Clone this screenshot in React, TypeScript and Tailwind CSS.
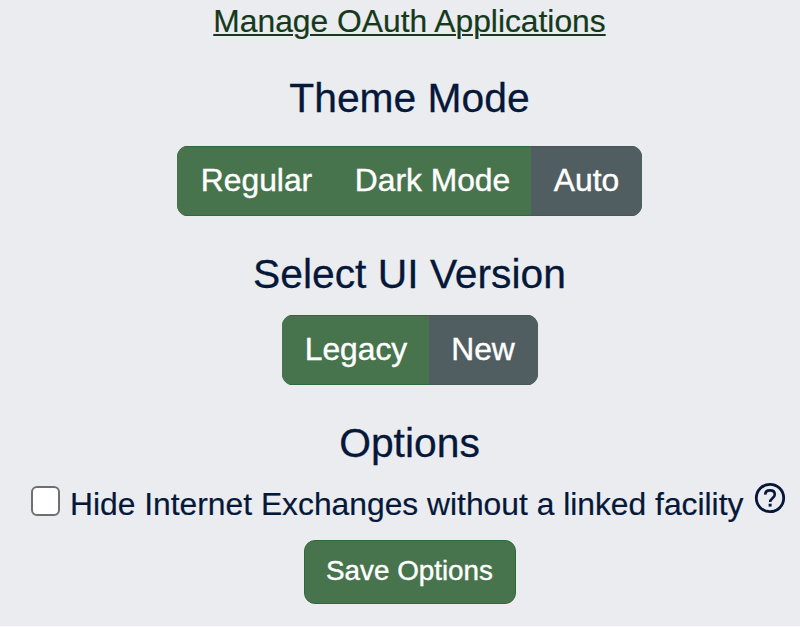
const heading = "h-[48px] whitespace-nowrap text-[40.8px] leading-[48px] [-webkit-text-stroke:0.3px_currentColor]";
const group =
  "flex h-[70px] overflow-hidden rounded-[11px] bg-[#47744d] text-[31.8px] leading-[66px] text-white [-webkit-text-stroke:0.4px_currentColor]";
const greenEdge = "border-y border-[#2c6a39] bg-[#47744d] pb-[2px]";
const greyEdge = "border-y border-[#455859] bg-[#515e61] pb-[2px]";

export default function App() {
  return (
    <main className="flex h-[627px] w-[800px] flex-col items-center overflow-hidden border-b border-[#fafafb] bg-[#ebecf0] pl-[19px] font-['Liberation_Sans',Arial,sans-serif] text-[#051839]">
      <a
        href="#"
        className="mt-[2px] h-[38px] whitespace-nowrap text-[31.8px] leading-[38px] text-[#143a1b] underline decoration-2 underline-offset-[2px] [-webkit-text-stroke:0.2px_currentColor]"
      >
        Manage OAuth Applications
      </a>

      <h2 className={`mt-[34px] ${heading}`}>Theme Mode</h2>
      <div className={`mt-[24px] ${group}`}>
        <button className={`w-[156px] pl-[3px] ${greenEdge}`}>Regular</button>
        <button className={`w-[198px] pl-[1px] ${greenEdge}`}>Dark Mode</button>
        <button className={`w-[111px] ${greyEdge}`}>Auto</button>
      </div>

      <h2 className={`mt-[34px] ${heading}`}>Select UI Version</h2>
      <div className={`mt-[17px] ${group}`}>
        <button className={`w-[147px] pl-[2px] ${greenEdge}`}>Legacy</button>
        <button className={`w-[109px] ${greyEdge}`}>New</button>
      </div>

      <h2 className={`mt-[34px] ${heading}`}>Options</h2>
      <div className="mt-[15px] flex h-[44px] w-full items-start pl-[12px]">
        <input
          type="checkbox"
          className="mt-[4px] h-[30px] w-[29px] shrink-0 appearance-none rounded-[6px] border-2 border-[#6f6f71] bg-white"
        />
        <label className="ml-[10px] mt-[3px] w-[674px] shrink-0 whitespace-nowrap text-[31.8px] leading-[38px] [-webkit-text-stroke:0.2px_currentColor]">
          Hide Internet Exchanges without a linked facility
        </label>
        <svg className="ml-[10px] h-[32px] w-[32px] shrink-0" viewBox="0 0 32 32" fill="none">
          <circle cx="16" cy="16" r="13.7" stroke="currentColor" strokeWidth="2.8" />
          <path
            d="M11.2 12.6C11.3 9.8 13.2 8.4 16 8.4c2.9 0 4.8 1.6 4.8 4.1 0 3.5-4.7 3.9-4.7 7.5"
            stroke="currentColor"
            strokeWidth="2.6"
          />
          <path d="M14.6 21.7h3v2.9h-3z" fill="currentColor" />
        </svg>
      </div>

      <button className="mt-[14px] h-[64px] w-[212px] rounded-[11px] border border-[#2c6a39] bg-[#47744d] pb-[2px] text-[27.8px] leading-[60px] text-white [-webkit-text-stroke:0.4px_currentColor]">
        Save Options
      </button>
    </main>
  );
}
